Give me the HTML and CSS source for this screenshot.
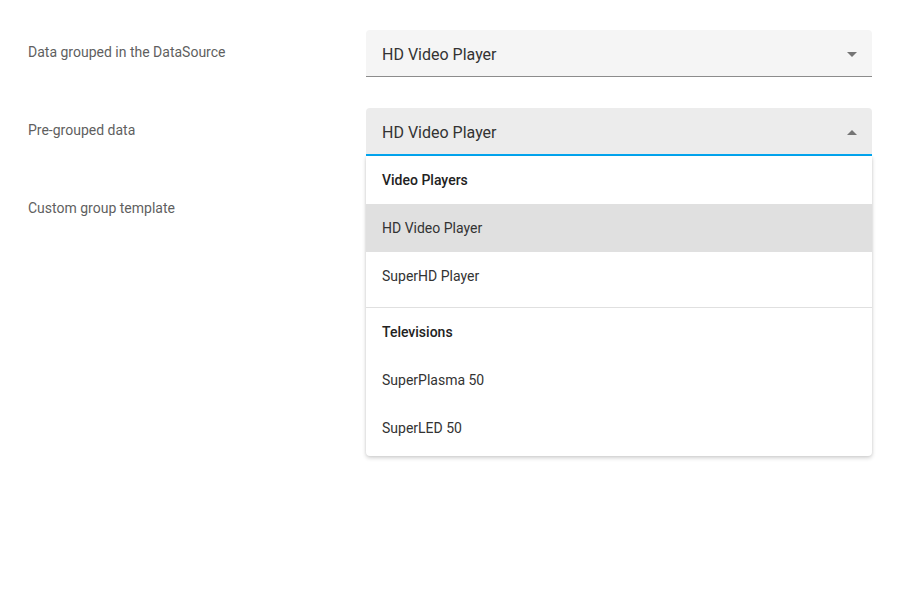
FILE: index.html
```html
<!DOCTYPE html>
<html>
<head>
<meta charset="utf-8">
<link rel="stylesheet" href="styles.css">
</head>
<body>
<div class="form">
  <div class="row">
    <div class="label">Data grouped in the DataSource</div>
    <div class="field">
      <div class="select">
        <span class="value">HD Video Player</span>
        <span class="arrow down"></span>
      </div>
    </div>
  </div>
  <div class="row">
    <div class="label">Pre-grouped data</div>
    <div class="field">
      <div class="select open">
        <span class="value">HD Video Player</span>
        <span class="arrow up"></span>
      </div>
      <div class="dropdown">
        <div class="group">
          <div class="group-head">Video Players</div>
          <div class="item active">HD Video Player</div>
          <div class="item">SuperHD Player</div>
        </div>
        <div class="group last">
          <div class="group-head">Televisions</div>
          <div class="item">SuperPlasma 50</div>
          <div class="item">SuperLED 50</div>
        </div>
      </div>
    </div>
  </div>
  <div class="row">
    <div class="label">Custom group template</div>
    <div class="field"></div>
  </div>
</div>
</body>
</html>
```
FILE: styles.css
```css
html, body {
  margin: 0;
  padding: 0;
  background: #fff;
}
body {
  font-family: Roboto, "Liberation Sans", sans-serif;
  width: 900px;
  height: 600px;
  overflow: hidden;
}
.form {
  padding: 30px 28px 0 28px;
  display: flex;
  flex-direction: column;
  gap: 31px;
}
.row {
  display: flex;
  align-items: flex-start;
  min-height: 47px;
}
.label {
  width: 338px;
  margin-top: 12px;
  font-size: 14px;
  line-height: 20px;
  color: #5f5f5f;
}
.field {
  position: relative;
  width: 506px;
}
.select {
  box-sizing: border-box;
  height: 47px;
  display: flex;
  align-items: center;
  justify-content: space-between;
  padding: 3px 15px 0 16px;
  background: #f5f5f5;
  border-bottom: 1px solid #8c8c8c;
  border-radius: 4px 4px 0 0;
}
.select.open {
  height: 48px;
  margin-bottom: -1px;
  background: #ececec;
  border-bottom: 2px solid #03a9f4;
}
.value {
  font-size: 16px;
  color: #333;
  line-height: 20px;
}
.arrow {
  width: 0;
  height: 0;
  border-left: 5px solid transparent;
  border-right: 5px solid transparent;
}
.arrow.down {
  border-top: 5px solid #757575;
}
.arrow.up {
  border-bottom: 5px solid #757575;
  margin-top: -1px;
}
.dropdown {
  position: absolute;
  left: 0;
  right: 0;
  top: 48px;
  background: #fff;
  border-radius: 0 0 4px 4px;
  box-shadow: 0 2px 4px rgba(0, 0, 0, 0.18), 0 0 3px rgba(0, 0, 0, 0.08);
  z-index: 5;
}
.group {
  padding-bottom: 7px;
  border-bottom: 1px solid #e0e0e0;
}
.group.last {
  padding-bottom: 4px;
  border-bottom: none;
}
.group-head, .item {
  height: 48px;
  display: flex;
  align-items: center;
  padding: 0 16px;
  font-size: 14px;
  color: #333;
}
.group-head {
  font-weight: 500;
  color: #222;
}
.item.active {
  background: #e0e0e0;
}
```
